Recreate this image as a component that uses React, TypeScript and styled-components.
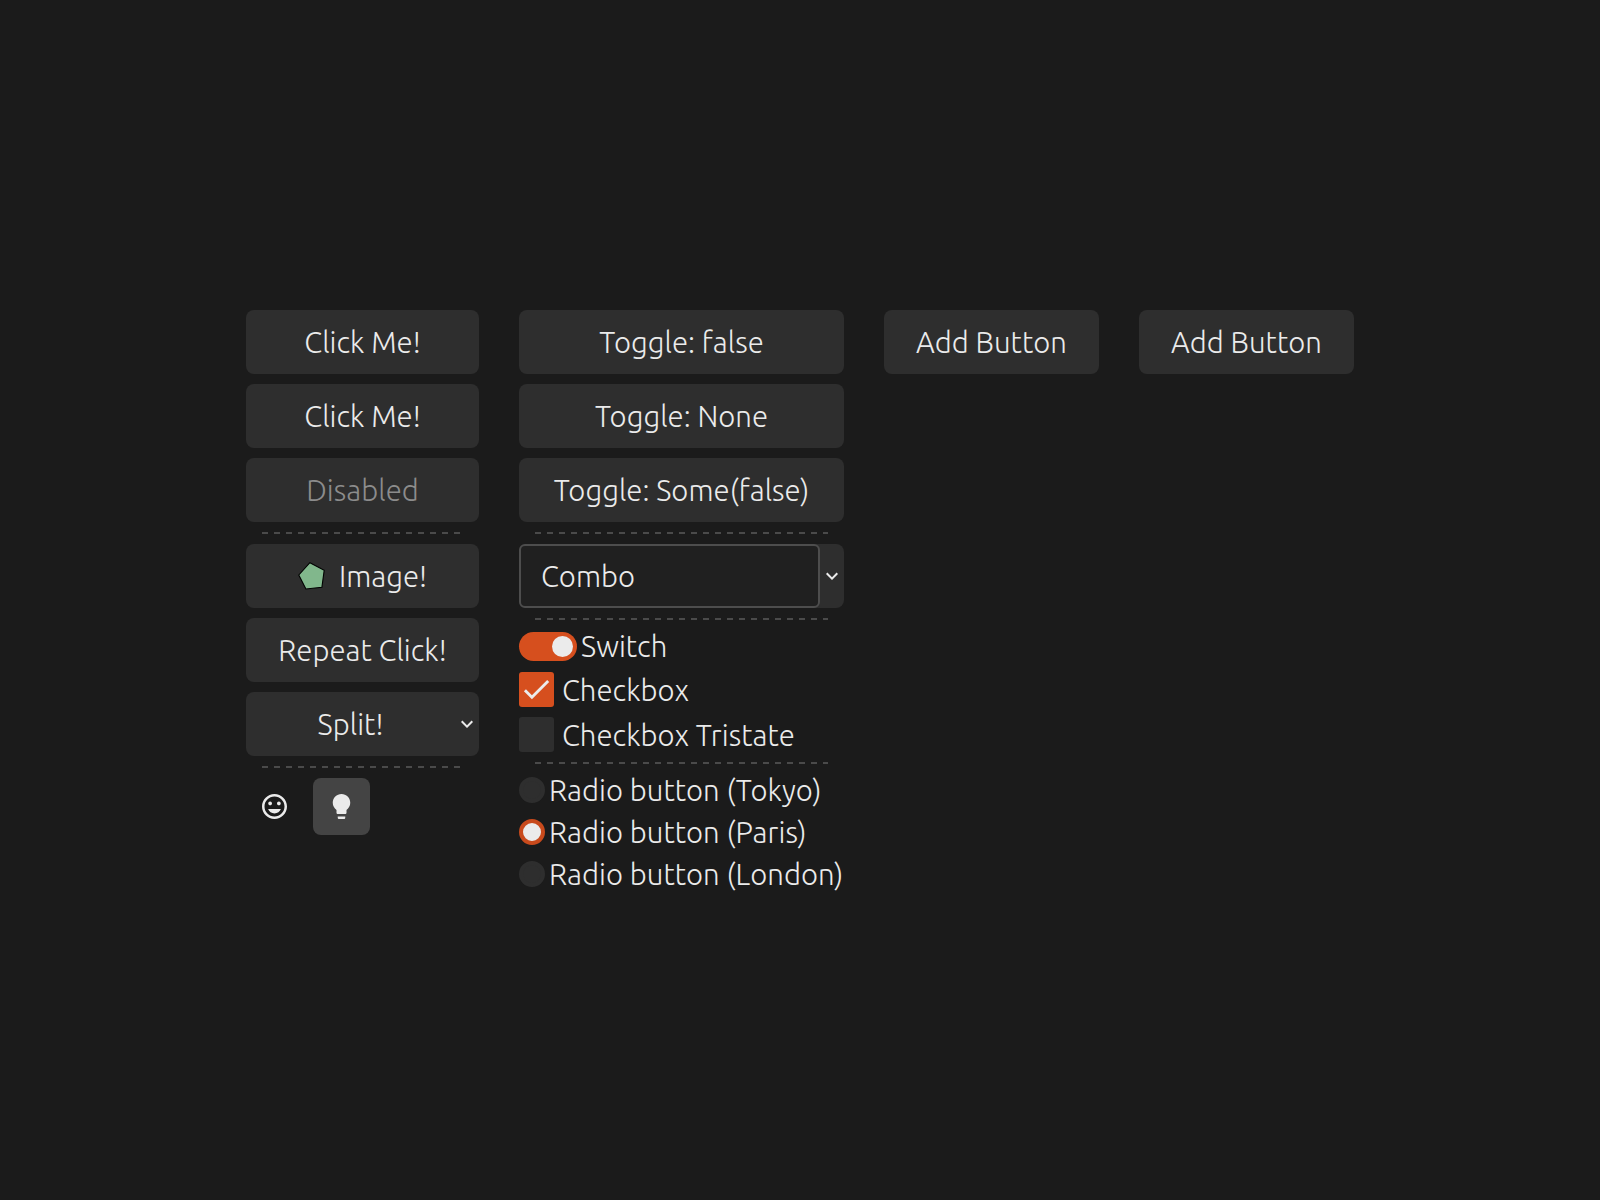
import React from 'react';
import styled, { createGlobalStyle, css } from 'styled-components';

const color = {
  window: '#1b1b1b',
  button: '#2e2e2e',
  active: '#444444',
  edit: '#202020',
  border: '#4d4d4d',
  line: '#4a4a4a',
  text: '#ebebeb',
  muted: '#8c8c8c',
  accent: '#d64f1e',
};

const GlobalStyle = createGlobalStyle`
  body {
    margin: 0;
    background: ${color.window};
    color: ${color.text};
    font-family: Ubuntu, "Open Sans", "Noto Sans", sans-serif;
    font-size: 29.33px;
    font-weight: 300;
    line-height: 32px;
    letter-spacing: 0.04px;
  }
`;

const Window = styled.main`
  box-sizing: border-box;
  width: 1600px;
  height: 1200px;
  display: flex;
  justify-content: center;
  align-items: center;
`;

const Columns = styled.div`
  display: flex;
  align-items: stretch;
  gap: 40px;
`;

const Column = styled.section<{ $width: number }>`
  width: ${(p) => p.$width}px;
  display: flex;
  flex-direction: column;
  gap: 10px;
`;

const reset = css`
  box-sizing: border-box;
  margin: 0;
  padding: 0;
  border: 0;
  font: inherit;
  letter-spacing: inherit;
  color: inherit;
  white-space: nowrap;
`;

const Label = styled.span`
  display: block;
  padding-top: 2px;
`;

const Button = styled.button`
  ${reset}
  height: 64px;
  display: flex;
  align-items: center;
  justify-content: center;
  gap: 9px;
  border-radius: 8px;
  background: ${color.button};

  &:disabled {
    color: ${color.muted};
  }
`;

const Split = styled.div`
  height: 64px;
  display: flex;
  border-radius: 8px;
  background: ${color.button};
`;

const SplitMain = styled.button`
  ${reset}
  flex: 1;
  background: transparent;
`;

const DropButton = styled.button`
  ${reset}
  width: 24px;
  display: flex;
  align-items: center;
  justify-content: center;
  background: transparent;
`;

const Edit = styled.div`
  flex: 1;
  display: flex;
  align-items: center;
  padding-left: 20px;
  border: 2px solid ${color.border};
  border-radius: 6px;
  background: ${color.edit};
`;

const Separator = styled.hr`
  align-self: stretch;
  height: 2px;
  margin: 0 16px;
  border: 0;
  background: repeating-linear-gradient(90deg, ${color.line} 0 6px, transparent 6px 12px);
`;

const IconRow = styled.div`
  display: flex;
  gap: 10px;
`;

const IconButton = styled.button<{ $checked?: boolean }>`
  ${reset}
  width: 57px;
  height: 57px;
  display: flex;
  align-items: center;
  justify-content: center;
  border-radius: 8px;
  background: ${(p) => (p.$checked ? color.active : 'transparent')};
`;

const Option = styled.label<{ $gap: number; $height: number }>`
  height: ${(p) => p.$height}px;
  display: flex;
  align-items: center;
  gap: ${(p) => p.$gap}px;
  white-space: nowrap;
`;

const SwitchTrack = styled.span`
  box-sizing: border-box;
  width: 58px;
  height: 29px;
  margin-top: 1px;
  padding: 4px;
  display: flex;
  justify-content: flex-end;
  border-radius: 15px;
  background: ${color.accent};
`;

const SwitchKnob = styled.span`
  width: 21px;
  height: 21px;
  border-radius: 50%;
  background: ${color.text};
`;

const CheckMark = styled.span<{ $checked?: boolean }>`
  width: 35px;
  height: 35px;
  display: flex;
  align-items: center;
  justify-content: center;
  border-radius: 3px;
  background: ${(p) => (p.$checked ? color.accent : color.button)};
`;

const RadioMark = styled.span<{ $checked?: boolean }>`
  box-sizing: border-box;
  width: 26px;
  height: 26px;
  border-radius: 50%;
  border: 4px solid ${(p) => (p.$checked ? '#c84a1c' : color.button)};
  background: ${(p) => (p.$checked ? color.text : color.button)};
`;

const Glyph = ({ d, size, box = '0 0 24 24' }: { d: string; size: number; box?: string }) => (
  <svg width={size} height={size} viewBox={box} fill={color.text}>
    <path d={d} />
  </svg>
);

const paddedBox = '-0.4 -0.4 24.8 24.8';

const icons = {
  chevron: 'M16.59 8.59L12 13.17 7.41 8.59 6 10l6 6 6-6z',
  check: 'M9 16.17L4.83 12l-1.42 1.41L9 19 21 7l-1.41-1.41z',
  smile:
    'M11.99 2C6.47 2 2 6.48 2 12s4.47 10 9.99 10C17.52 22 22 17.52 22 12S17.52 2 11.99 2zM12 20c-4.42 0-8-3.58-8-8s3.58-8 8-8 8 3.58 8 8-3.58 8-8 8zm3.5-9c.83 0 1.5-.67 1.5-1.5S16.33 8 15.5 8 14 8.67 14 9.5s.67 1.5 1.5 1.5zm-7 0c.83 0 1.5-.67 1.5-1.5S9.33 8 8.5 8 7 8.67 7 9.5 7.67 11 8.5 11zm3.5 6.5c2.33 0 4.31-1.46 5.11-3.5H6.89c.8 2.04 2.78 3.5 5.11 3.5z',
  bulb: 'M9 21c0 .55.45 1 1 1h4c.55 0 1-.45 1-1v-1H9v1zm3-19C8.14 2 5 5.14 5 9c0 2.38 1.19 4.47 3 5.74V17c0 .55.45 1 1 1h6c.55 0 1-.45 1-1v-2.26c1.81-1.27 3-3.36 3-5.74 0-3.86-3.14-7-7-7z',
};

const Pentagon = () => (
  <svg width="32" height="32" viewBox="0 0 32 32">
    <polygon
      points="11.9,2.7 26.2,10.2 23.9,27.3 7.9,29 0.8,15"
      fill="#81b78c"
      stroke="#000"
      strokeWidth="1.1"
    />
  </svg>
);

const TextButton = ({ text, disabled }: { text: string; disabled?: boolean }) => (
  <Button disabled={disabled}>
    <Label>{text}</Label>
  </Button>
);

export default function App() {
  return (
    <Window>
      <GlobalStyle />
      <Columns>
        <Column $width={233}>
          <TextButton text="Click Me!" />
          <TextButton text="Click Me!" />
          <TextButton text="Disabled" disabled />
          <Separator />
          <Button>
            <Pentagon />
            <Label>Image!</Label>
          </Button>
          <TextButton text="Repeat Click!" />
          <Split>
            <SplitMain>
              <Label>Split!</Label>
            </SplitMain>
            <DropButton>
              <Glyph d={icons.chevron} size={24} />
            </DropButton>
          </Split>
          <Separator />
          <IconRow>
            <IconButton>
              <Glyph d={icons.smile} size={31} box={paddedBox} />
            </IconButton>
            <IconButton $checked>
              <Glyph d={icons.bulb} size={31} box={paddedBox} />
            </IconButton>
          </IconRow>
        </Column>

        <Column $width={325}>
          <TextButton text="Toggle: false" />
          <TextButton text="Toggle: None" />
          <TextButton text="Toggle: Some(false)" />
          <Separator />
          <Split>
            <Edit>
              <Label>Combo</Label>
            </Edit>
            <DropButton>
              <Glyph d={icons.chevron} size={24} />
            </DropButton>
          </Split>
          <Separator />
          <Option $height={32} $gap={4}>
            <SwitchTrack>
              <SwitchKnob />
            </SwitchTrack>
            <Label>Switch</Label>
          </Option>
          <Option $height={35} $gap={8}>
            <CheckMark $checked>
              <Glyph d={icons.check} size={34.5} />
            </CheckMark>
            <Label>Checkbox</Label>
          </Option>
          <Option $height={35} $gap={8}>
            <CheckMark />
            <Label>Checkbox Tristate</Label>
          </Option>
          <Separator />
          <Option $height={32} $gap={4}>
            <RadioMark />
            <Label>Radio button (Tokyo)</Label>
          </Option>
          <Option $height={32} $gap={4}>
            <RadioMark $checked />
            <Label>Radio button (Paris)</Label>
          </Option>
          <Option $height={32} $gap={4}>
            <RadioMark />
            <Label>Radio button (London)</Label>
          </Option>
        </Column>

        <Column $width={215}>
          <TextButton text="Add Button" />
        </Column>
        <Column $width={215}>
          <TextButton text="Add Button" />
        </Column>
      </Columns>
    </Window>
  );
}
